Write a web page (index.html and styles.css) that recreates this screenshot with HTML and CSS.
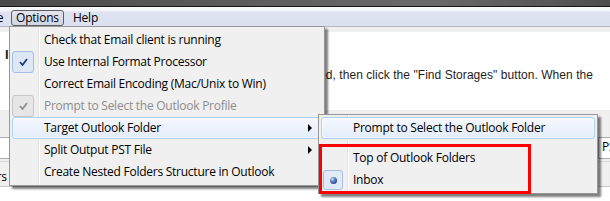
FILE: index.html
```html
<!DOCTYPE html>
<html>
<head>
<meta charset="utf-8">
<title>Options menu</title>
<link rel="stylesheet" href="styles.css">
</head>
<body>
<div class="window">
  <div class="titlebar"></div>
  <nav class="menubar">
    <span class="mb-item mb-file">File</span>
    <span class="mb-item mb-open">Options</span>
    <span class="mb-item mb-help">Help</span>
  </nav>
  <div class="toolstrip"></div>
  <main class="content">
    <h2 class="heading">Instructions</h2>
    <div class="desc"><span>Select the Outlook profile that contains the messages you want to have converted, then click the "Find Storages" button. When the</span></div>
  </main>
  <section class="panel">
    <div class="panel-row">
      <div class="field field-wide"></div>
      <div class="field field-pst">PST</div>
    </div>
    <div class="panel-row2">
      <span class="plabel">Folders</span>
    </div>
  </section>

  <div class="menu menu-main">
    <div class="mi"><span class="ic"></span><span class="mt">Check that Email client is running</span></div>
    <div class="mi"><span class="ic ic-check"><svg viewBox="0 0 9 8"><path d="M1 4 L3.5 7 L8 1"/></svg></span><span class="mt">Use Internal Format Processor</span></div>
    <div class="mi"><span class="ic"></span><span class="mt">Correct Email Encoding (Mac/Unix to Win)</span></div>
    <div class="mi mi-disabled"><span class="ic ic-check"><svg viewBox="0 0 9 8"><path d="M1 4 L3.5 7 L8 1"/></svg></span><span class="mt">Prompt to Select the Outlook Profile</span></div>
    <div class="mi mi-hot"><span class="ic"></span><span class="mt">Target Outlook Folder</span><span class="arrow"></span></div>
    <div class="mi"><span class="ic"></span><span class="mt">Split Output PST File</span><span class="arrow"></span></div>
    <div class="mi"><span class="ic"></span><span class="mt">Create Nested Folders Structure in Outlook</span></div>
  </div>

  <div class="menu menu-sub">
    <div class="mi mi-hot"><span class="ic"></span><span class="mt">Prompt to Select the Outlook Folder</span></div>
    <div class="msep"></div>
    <div class="mi"><span class="ic"></span><span class="mt">Top of Outlook Folders</span></div>
    <div class="mi"><span class="ic ic-radio"><span class="dot"></span></span><span class="mt">Inbox</span></div>
  </div>

  <div class="callout"></div>
</div>
</body>
</html>
```

FILE: styles.css
```css
* { box-sizing: border-box; }
html, body { margin: 0; padding: 0; }
body {
  width: 610px;
  height: 201px;
  overflow: hidden;
  background: #ffffff;
  font-family: "Open Sans", "Noto Sans", sans-serif;
  font-size: 12px;
  color: #000;
}
.window {
  position: relative;
  width: 610px;
  height: 201px;
  overflow: hidden;
}
.titlebar {
  height: 7px;
  background: linear-gradient(to right, #4a4a4a, #5c5c5c 40%, #6a6a6a 70%, #4e4e4e);
  border-bottom: 1px solid #151515;
}
.menubar {
  display: flex;
  align-items: flex-start;
  height: 20px;
  background: linear-gradient(#fafbfd 0, #f1f3f8 4px, #dfe3f1 5px, #dce1ef 100%);
  border-bottom: 1px solid #b3b8c6;
  letter-spacing: -0.2px;
}
.mb-item { line-height: 14px; margin-top: 4px; white-space: nowrap; }
.mb-file { width: 26px; margin-left: -15px; flex: none; }
.mb-open {
  margin-top: 3px;
  height: 16px;
  border: 1px solid #5f5f5f;
  border-radius: 3px;
  padding: 0 4px;
  background: linear-gradient(#e2e5ee, #d0d5e3);
}
.mb-help { margin-left: 4px; padding: 0 5px; }
.toolstrip { height: 5px; background: #f0f0f0; }
.content {
  height: 78px;
  padding: 15px 0 0 5px;
  background: #fff;
}
.heading {
  margin: 0;
  font: bold 13px/16px "Liberation Sans", Arial, sans-serif;
  color: #1a1a1a;
}
.desc {
  display: flex;
  justify-content: flex-end;
  width: 583px;
  margin: 5px 0 0 5px;
  white-space: nowrap;
  overflow: hidden;
  font: 12px/15px "Liberation Sans", Arial, sans-serif;
  letter-spacing: 0.05px;
  color: #1e1e1e;
}
.desc span { flex: none; }
.panel {
  height: 77px;
  padding-top: 27px;
  background: #f0f0f0;
  border-bottom: 1px solid #c9c9c9;
}
.panel-row { display: flex; height: 22px; }
.field { height: 22px; background: #fff; border: 1px solid #abadb3; }
.field-wide { width: 520px; margin-left: -2px; }
.field-pst {
  margin-left: auto;
  margin-right: -28px;
  width: 40px;
  padding-left: 3px;
  line-height: 18px;
  letter-spacing: -0.2px;
}
.panel-row2 {
  display: flex;
  align-items: center;
  height: 26px;
  margin-top: 2px;
  padding-top: 3px;
  border-top: 1px solid #d8d8d8;
}
.plabel { margin-left: -33px; letter-spacing: -0.2px; }

.menu {
  position: absolute;
  padding: 2px;
  border: 1px solid #979797;
  background:
    linear-gradient(to right, transparent 28px, #e2e3e3 28px, #e2e3e3 29px, #ffffff 29px, #ffffff 30px, transparent 30px),
    #f0f0f0;
  box-shadow: 3px 3px 2px rgba(0, 0, 0, 0.5);
  letter-spacing: -0.25px;
}
.menu-main { left: 9px; top: 26px; width: 316px; }
.menu-sub { left: 318px; top: 114px; width: 280px; }
.mi {
  display: flex;
  align-items: center;
  height: 22px;
  border: 1px solid transparent;
  border-radius: 3px;
  white-space: nowrap;
}
.mi-hot {
  border-color: #aecff7;
  background: linear-gradient(#f5f8fd, #e3ecf9);
  box-shadow: inset 0 0 0 1px rgba(255, 255, 255, 0.55);
}
.ic {
  flex: none;
  display: flex;
  align-items: center;
  justify-content: center;
  width: 22px;
  height: 22px;
  margin: -1px 0 -1px -1px;
  border: 1px solid transparent;
  border-radius: 3px;
}
.ic-check { border-color: #a6bee3; background: #dde7f5; }
.ic-check svg { width: 9px; height: 8px; display: block; }
.ic-check path { fill: none; stroke: #1d3b7b; stroke-width: 1.8; }
.mi-disabled .mt { color: #8d8d8d; }
.mi-disabled .ic-check { border-color: #c8c8c8; background: #e6e6e6; }
.mi-disabled .ic-check path { stroke: #8f8f8f; }
.ic-radio {
  width: 20px;
  height: 20px;
  margin: 0 0 0 1px;
  border-color: #a6bee3;
  background: #e2eaf7;
}
.dot {
  width: 7px;
  height: 7px;
  border-radius: 50%;
  background: radial-gradient(circle at 35% 30%, #d6e2f5 0, #6d8fcf 30%, #24468e 75%, #1a2f66 100%);
}
.mt { margin-left: 10px; line-height: 20px; }
.arrow {
  margin-left: auto;
  margin-right: 9px;
  width: 0;
  height: 0;
  border-left: 4px solid #000;
  border-top: 4px solid transparent;
  border-bottom: 4px solid transparent;
}
.msep { height: 8px; }
.callout {
  position: absolute;
  left: 319px;
  top: 144px;
  width: 212px;
  height: 50px;
  border: 3px solid #ff0000;
}
```
